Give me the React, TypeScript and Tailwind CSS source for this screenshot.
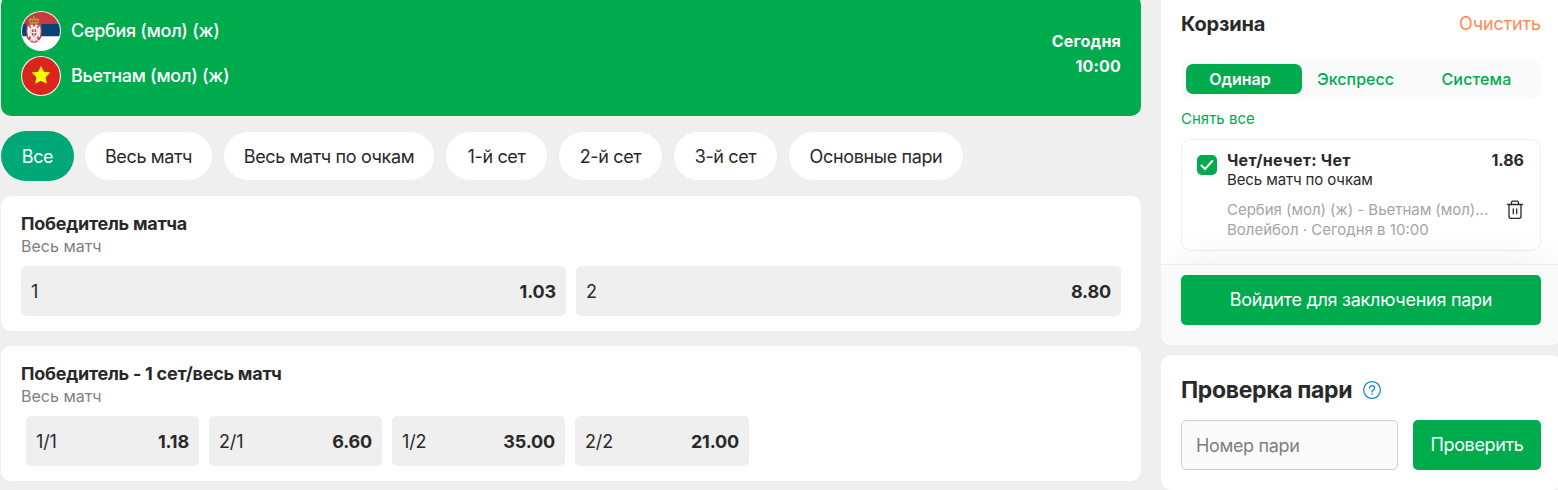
import { useState } from "react"
import clsx from "clsx"

interface Outcome {
  label: string
  odds: string
}

const FILTERS = [
  { label: "Весь матч", width: "w-[127px]" },
  { label: "Весь матч по очкам", width: "w-[210px]" },
  { label: "1-й сет", width: "w-[101px]" },
  { label: "2-й сет", width: "w-[103px]" },
  { label: "3-й сет", width: "w-[103px]" },
  { label: "Основные пари", width: "w-[174px]" },
]

const WINNER: Outcome[] = [
  { label: "1", odds: "1.03" },
  { label: "2", odds: "8.80" },
]

const SET_AND_MATCH: Outcome[] = [
  { label: "1/1", odds: "1.18" },
  { label: "2/1", odds: "6.60" },
  { label: "1/2", odds: "35.00" },
  { label: "2/2", odds: "21.00" },
]

export default function App() {
  return (
    <div className="flex h-[490px] w-[1558px] gap-5 overflow-hidden bg-[#efefef] pl-px font-['Inter',sans-serif] text-[#292929]">
      <main className="w-[1140px] shrink-0">
        <MatchHeader />
        <Filters />
        <Market title="Победитель матча">
          <div className="mt-[9px] grid grid-cols-2 gap-2.5">
            {WINNER.map((o) => (
              <OutcomeButton key={o.label} outcome={o} />
            ))}
          </div>
        </Market>
        <Market title="Победитель - 1 сет/весь матч">
          <div className="mt-[9px] ml-[5px] grid grid-cols-[173px_173px_173px_174px] gap-2.5">
            {SET_AND_MATCH.map((o) => (
              <OutcomeButton key={o.label} outcome={o} />
            ))}
          </div>
        </Market>
      </main>
      <aside className="w-[400px] shrink-0">
        <Basket />
        <BetCheck />
      </aside>
    </div>
  )
}

function MatchHeader() {
  return (
    <section className="-mt-[5px] flex h-[121px] items-start justify-between rounded-[10px] bg-[#00ab4e] px-5 pt-4 text-white">
      <div className="space-y-[5px] text-lg font-medium tracking-[-0.3px]">
        <div className="flex h-10 items-center gap-2.5">
          <SerbiaFlag />
          <span>Сербия (мол) (ж)</span>
        </div>
        <div className="flex h-10 items-center gap-2.5">
          <VietnamFlag />
          <span>Вьетнам (мол) (ж)</span>
        </div>
      </div>
      <div className="mt-[18px] text-right text-base leading-[25px] font-bold tracking-[0.2px]">
        <div>Сегодня</div>
        <div>10:00</div>
      </div>
    </section>
  )
}

function Filters() {
  return (
    <div className="mt-[15px] flex h-[50px] items-center gap-3 text-lg tracking-[-0.36px]">
      <button className="-mr-px h-[50px] w-[73px] rounded-[25px] bg-[#00a878] pt-0.5 text-white">Все</button>
      {FILTERS.map((f) => (
        <button key={f.label} className={clsx("h-12 rounded-[24px] bg-white pt-0.5 whitespace-nowrap", f.width)}>
          {f.label}
        </button>
      ))}
    </div>
  )
}

function Market({ title, children }: { title: string; children: React.ReactNode }) {
  return (
    <section className="mt-[15px] h-[135px] rounded-[10px] bg-white px-5 pt-4">
      <h2 className="text-lg leading-6 font-bold tracking-[-0.25px]">{title}</h2>
      <p className="text-base leading-[21px] text-[#7f7f7f]">Весь матч</p>
      {children}
    </section>
  )
}

function OutcomeButton({ outcome }: { outcome: Outcome }) {
  return (
    <button className="flex h-[50px] items-center justify-between rounded-[5px] bg-[#efefef] px-2.5 pt-0.5 text-lg tracking-[-0.15px]">
      <span>{outcome.label}</span>
      <span className="font-bold">{outcome.odds}</span>
    </button>
  )
}

function Basket() {
  const [checked, setChecked] = useState(true)

  return (
    <section className="h-[345px] overflow-hidden rounded-b-[10px] bg-white">
      <div className="h-[264px] px-5 pt-2.5">
        <div className="flex h-7 items-center justify-between">
          <h2 className="text-xl font-bold tracking-[-0.15px]">Корзина</h2>
          <button className="text-lg tracking-[-0.15px] text-[#ff8a57]">Очистить</button>
        </div>

        {/* Bet type */}
        <div className="mt-[21px] flex h-10 items-center rounded-[10px] bg-[#fafafa] px-[5px] text-base font-medium text-[#00ab4e]">
          <button className="h-[30px] w-[116px] rounded-[7px] bg-[#00ab4e] pr-2 font-semibold text-white">
            Одинар
          </button>
          <button className="w-[107px]">Экспресс</button>
          <button className="w-[127px] pl-2 tracking-[0.15px]">Система</button>
        </div>
        <button className="mt-2.5 block text-[15px] leading-5 text-[#00ab4e]">Снять все</button>

        {/* Selected bet */}
        <div className="mt-2.5 flex h-28 rounded-[10px] border border-[#efefef] pt-2.5 pr-4 pl-[15px]">
          <button
            onClick={() => setChecked(!checked)}
            className="mt-[5px] flex h-5 w-5 shrink-0 items-center justify-center rounded-[5px] bg-[#00ab4e]"
          >
            {checked && (
              <svg width="14" height="12" viewBox="0 0 14 12" fill="none">
                <path d="M1.5 6.5 5 10 12.3 2" stroke="white" strokeWidth="2" strokeLinecap="round" />
              </svg>
            )}
          </button>
          <div className="ml-2.5 min-w-0 flex-1">
            <div className="flex justify-between text-base leading-5 font-bold">
              <span className="tracking-[0.27px]">Чет/нечет: Чет</span>
              <span>1.86</span>
            </div>
            <div className="text-[15px] leading-5 tracking-[-0.1px]">Весь матч по очкам</div>
            <div className="mt-2.5 flex items-start justify-between">
              <div className="text-[15px] leading-5 whitespace-nowrap text-[#a5a5a5]">
                <div className="tracking-[-0.03px]">Сербия (мол) (ж) - Вьетнам (мол)...</div>
                <div>Волейбол · Сегодня в 10:00</div>
              </div>
              <TrashIcon />
            </div>
          </div>
        </div>
      </div>

      <div className="h-[81px] border-t border-[#ededed] bg-[#fafafa] px-5 pt-2.5 shadow-[0_-10px_40px_-10px_rgba(0,0,0,0.07)]">
        <button className="h-[50px] w-full rounded-[5px] bg-[#00ab4e] text-lg tracking-[-0.26px] text-white">
          Войдите для заключения пари
        </button>
      </div>
    </section>
  )
}

function BetCheck() {
  return (
    <section className="mt-2.5 h-[135px] rounded-[10px] bg-white px-5 pt-5">
      <div className="flex h-[30px] items-center gap-2.5">
        <h2 className="w-[171px] text-[23px] font-bold tracking-[-0.35px] whitespace-nowrap">Проверка пари</h2>
        <svg width="20" height="20" viewBox="0 0 20 20" fill="none" stroke="#1487ca" strokeLinecap="round">
          <circle cx="10" cy="10" r="8.4" strokeWidth="1.3" />
          <path d="M7.6 8c0-3.2 5-3 5-.1 0 1.9-2.5 1.8-2.5 3.9" strokeWidth="1.3" />
          <circle cx="10.1" cy="14" r=".35" strokeWidth=".7" />
        </svg>
      </div>
      <div className="mt-[15px] flex gap-[15px] text-lg tracking-[-0.35px]">
        <input
          placeholder="Номер пари"
          className="h-[50px] w-[217px] rounded-[5px] border border-[#cfcfcf] bg-[#fafafa] px-3.5 outline-none placeholder:text-[#7f7f7f]"
        />
        <button className="h-[50px] w-32 rounded-[5px] bg-[#00ab4e] text-white">Проверить</button>
      </div>
    </section>
  )
}

function TrashIcon() {
  return (
    <svg width="18" height="20" viewBox="0 0 18 20" fill="none" stroke="#292929" strokeWidth="1.3" strokeLinecap="round">
      <path d="M1.5 4.5h15M5.5 4.3V2.5c0-1 .6-1.4 1.4-1.4h4.2c.8 0 1.4.4 1.4 1.4v1.8M3 4.7v11.6c0 1.3.7 2 2 2h8c1.3 0 2-.7 2-2V4.7M7.3 9v4.8M10.7 9v4.8" />
    </svg>
  )
}

function SerbiaFlag() {
  return (
    <svg width="40" height="40" viewBox="0 0 40 40">
      <defs>
        <clipPath id="serbia">
          <circle cx="20" cy="20" r="19" />
        </clipPath>
      </defs>
      <circle cx="20" cy="20" r="20" fill="#f7f3f3" />
      <g clipPath="url(#serbia)">
        <path d="M0 0h40v13H0z" fill="#c73a40" />
        <path d="M0 13h40v12.5H0z" fill="#0c4077" />
        <path d="M0 25.5h40V40H0z" fill="#fff" />
        <path d="M5.5 13h15v11c0 4.5-3.5 7-7.500 8-4-1-7.500-3.500-7.500-8z" fill="#c4474b" />
        {/* Double-headed eagle */}
        <path
          d="M13 16 11.500 13.500 8.500 14l1.500 1.500v2L7 14.500 6.200 20l1 6.500L9.500 25l.5 2.500L8 30l3.500-.5L13 31.500l1.500-2 3.500.5-2-2.500.5-2.500 2.300 1.500 1-6.500-.8-5.500-3 3v-2L17.500 14l-3-.5z"
          fill="#ece9e9"
        />
        <path d="M10.800 18.500h4.400v5.200L13 25.800l-2.200-2.100z" fill="#c73a40" />
        <path d="M13 18.500v6.500M10.800 21.500h4.400" stroke="#eee" strokeWidth="1.200" />
        {/* Crown */}
        <path d="M9 12.800 7.500 9c.8-2 3.500-2.200 4.700-1V5.300h1.600V8c1.200-1.200 3.900-1 4.700 1L17 12.800z" fill="#b99a35" />
        <path d="M9.600 9.500h1.500V11H9.600zM12.300 9h1.500v2h-1.500zM15 9.500h1.500V11H15z" fill="#a83f35" />
      </g>
    </svg>
  )
}

function VietnamFlag() {
  return (
    <svg width="40" height="40" viewBox="0 0 40 40">
      <circle cx="20" cy="20" r="20" fill="#f5eeee" />
      <circle cx="20" cy="20" r="18.9" fill="#da251d" />
      <path
        d="M20 9.8 22.800 15.700 29.400 16.500 24.600 21.200 25.800 27.800 20 24.700 14.200 27.800 15.400 21.200 10.600 16.500 17.200 15.700z"
        fill="#ff0"
      />
    </svg>
  )
}
